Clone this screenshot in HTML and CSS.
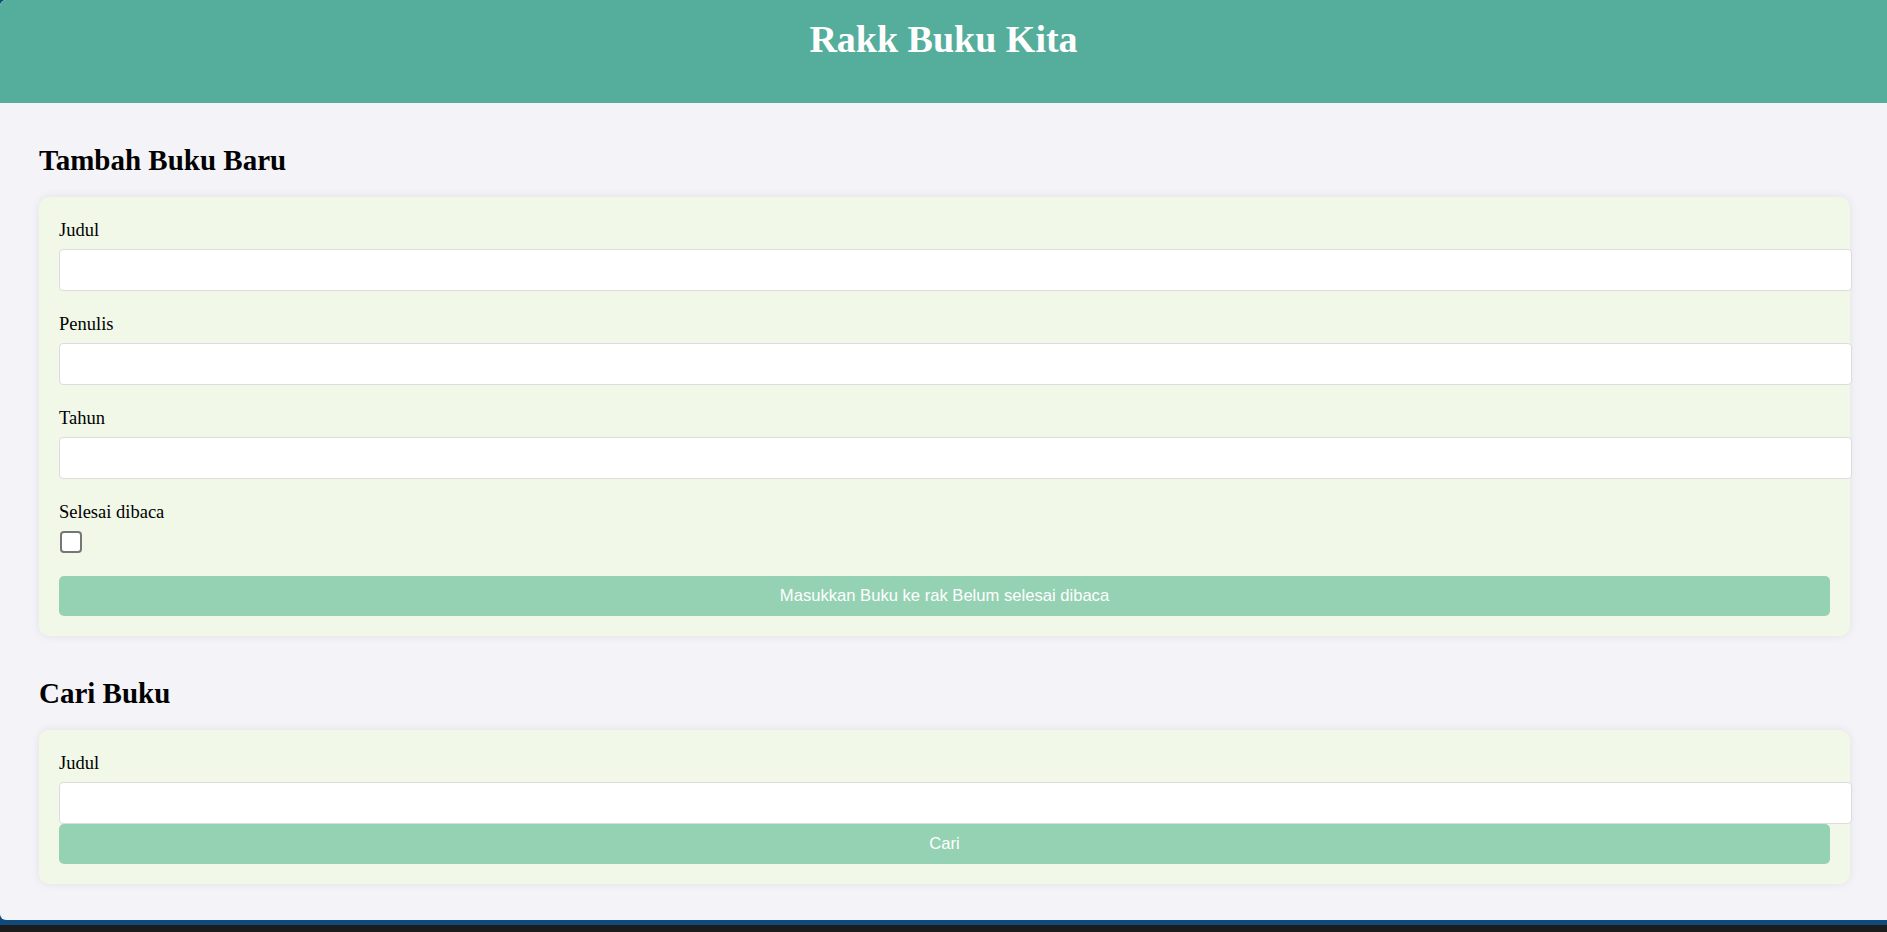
FILE: index.html
```html
<!DOCTYPE html>
<html lang="id">
<head>
<meta charset="utf-8">
<title>Rakk Buku Kita</title>
<link rel="stylesheet" href="styles.css">
</head>
<body>
<div class="screen">
  <div class="app">
    <header class="topbar">
      <h1 class="title">Rakk Buku Kita</h1>
    </header>
    <main class="content">
      <section class="section">
        <h2 class="section-title">Tambah Buku Baru</h2>
        <form class="card">
          <div class="field">
            <label class="label">Judul</label>
            <input class="input" type="text">
          </div>
          <div class="field">
            <label class="label">Penulis</label>
            <input class="input" type="text">
          </div>
          <div class="field">
            <label class="label">Tahun</label>
            <input class="input" type="number">
          </div>
          <div class="field field-check">
            <label class="label">Selesai dibaca</label>
            <input class="check" type="checkbox">
          </div>
          <button class="btn" type="button">Masukkan Buku ke rak Belum selesai dibaca</button>
        </form>
      </section>
      <section class="section section-search">
        <h2 class="section-title">Cari Buku</h2>
        <form class="card">
          <label class="label">Judul</label>
          <input class="input" type="text">
          <button class="btn" type="button">Cari</button>
        </form>
      </section>
    </main>
  </div>
  <div class="taskbar"></div>
</div>
</body>
</html>
```
FILE: styles.css
```css
* { box-sizing: border-box; }

html, body {
  margin: 0;
  padding: 0;
  height: 100%;
}

body {
  background: #1c1c1c;
  font-family: "Liberation Serif", "Times New Roman", serif;
  color: #000;
}

.screen {
  height: 100vh;
  display: flex;
  flex-direction: column;
  background: #0f4a7c;
}

.app {
  flex: 1;
  background: #f3f3f8;
  border-radius: 6px 0 0 6px;
  overflow: hidden;
  margin-bottom: 5px;
}

.taskbar {
  height: 7px;
  background: #1c1c1c;
  flex: none;
}

.topbar {
  background: #55ad9b;
  padding: 17px 0 42px;
  text-align: center;
}

.title {
  margin: 0;
  color: #fff;
  font-size: 38px;
  line-height: 44px;
  font-weight: 700;
}

.content {
  padding: 40px 37px 0 39px;
}

.section-title {
  margin: 0 0 20px;
  font-size: 29px;
  line-height: 34px;
  font-weight: 700;
}

.section-search {
  margin-top: 40px;
}

.card {
  background: #f1f8e8;
  border-radius: 10px;
  padding: 20px;
  box-shadow: 0 0 10px rgba(0, 0, 0, 0.08);
}

.field {
  margin-bottom: 20px;
}

.field-check {
  margin-bottom: 23px;
}

.label {
  display: block;
  font-size: 18.5px;
  line-height: 26px;
  margin-bottom: 6px;
}

.input {
  display: block;
  box-sizing: content-box;
  width: 100%;
  height: 20px;
  padding: 10px;
  margin: 0;
  border: 1px solid #dcdcdc;
  border-radius: 4px;
  background: #fff;
  font-size: 16px;
  outline: none;
}

.check {
  display: block;
  appearance: none;
  -webkit-appearance: none;
  width: 22px;
  height: 22px;
  margin: 0 0 0 1px;
  border: 2px solid #767676;
  border-radius: 4px;
  background: #fff;
}

.btn {
  display: block;
  width: 100%;
  height: 40px;
  margin: 0;
  border: none;
  border-radius: 5px;
  background: #95d2b3;
  color: #fff;
  font-family: "Liberation Sans", Arial, sans-serif;
  font-size: 16.6px;
  cursor: pointer;
}
```
